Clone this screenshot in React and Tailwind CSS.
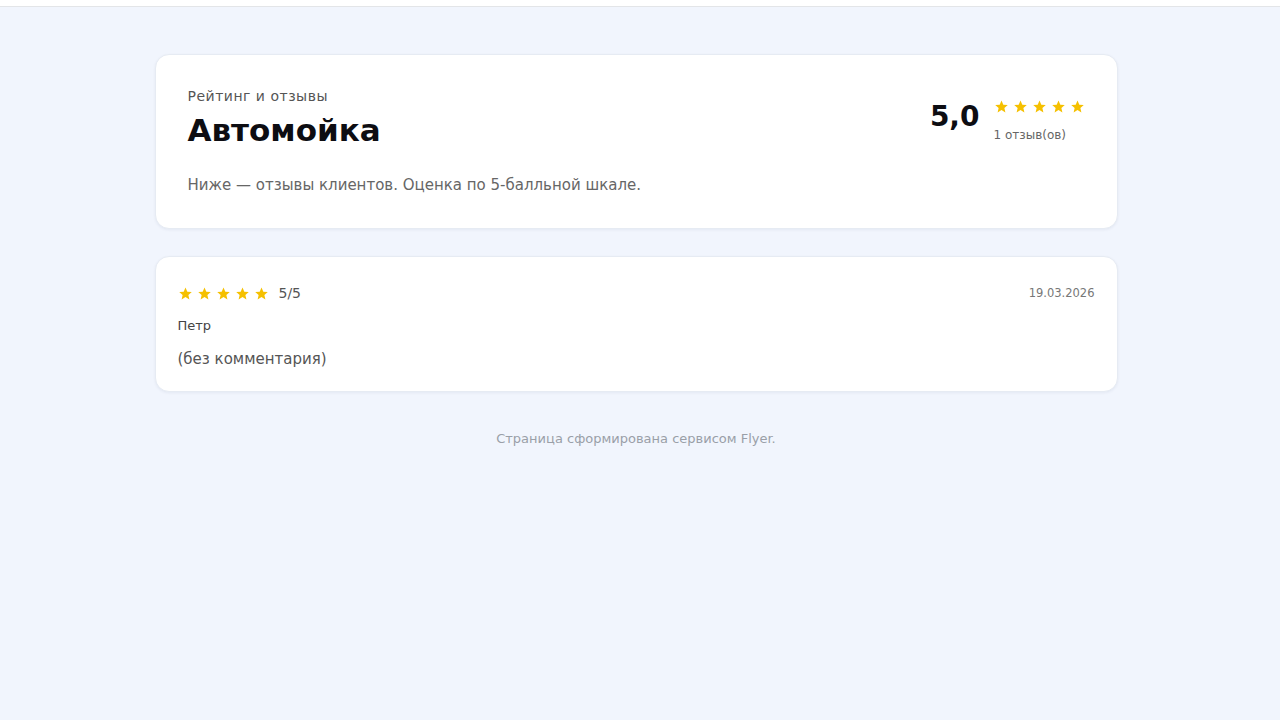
import React from "react";

function Star({ size = 13 }) {
  return (
    <svg width={size} height={size} viewBox="0 0 24 24" className="shrink-0">
      <path
        d="M12 2.5l2.9 6.6 7.1.6-5.4 4.7 1.6 7-6.2-3.7-6.2 3.7 1.6-7L2 9.7l7.1-.6z"
        fill="#f5c000"
      />
    </svg>
  );
}

function Stars({ size, gap }) {
  return (
    <div className={`flex items-center ${gap}`}>
      {[0, 1, 2, 3, 4].map((i) => (
        <Star key={i} size={size} />
      ))}
    </div>
  );
}

export default function App() {
  return (
    <div
      className="min-h-[720px] bg-[#f1f5fd] text-[#111]"
      style={{ fontFamily: '"DejaVu Sans", "Noto Sans", sans-serif' }}
    >
      <div className="h-[7px] bg-white border-b border-[#e3e5e8]" />
      <div className="pr-2">
        <div className="mx-auto w-[963px] pt-[47px]">
          <div className="rounded-[14px] bg-white border border-[#e6ebf3] shadow-[0_1px_3px_rgba(20,40,80,0.06)] px-8 pt-[31px] pb-[32px]">
            <div className="flex items-start justify-between">
              <div>
                <div className="text-[14px] tracking-[0.5px] text-[#555] leading-[20px]">Рейтинг и отзывы</div>
                <div className="text-[31px] font-semibold leading-[38px] mt-[5px] text-[#0d0d12]">Автомойка</div>
              </div>
              <div className="flex items-start gap-[14px] pt-[13px]">
                <div className="text-[28px] font-semibold leading-[36px] text-[#0d0d12]">5,0</div>
                <div className="flex flex-col">
                  <Stars size={15} gap="gap-[4px]" />
                  <div className="text-[12px] text-[#666] leading-[16px] mt-[13px]">1 отзыв(ов)</div>
                </div>
              </div>
            </div>
            <div className="text-[15px] text-[#666] mt-[25px] leading-[22px]">
              Ниже — отзывы клиентов. Оценка по 5-балльной шкале.
            </div>
          </div>

          <div className="mt-[27px] rounded-[14px] bg-white border border-[#e6ebf3] shadow-[0_1px_3px_rgba(20,40,80,0.06)] px-[22px] pt-[26px] pb-[21px]">
            <div className="flex items-center justify-between">
              <div className="flex items-center gap-[10px]">
                <Stars size={15} gap="gap-[4px]" />
                <span className="text-[14px] text-[#555]">5/5</span>
              </div>
              <span className="text-[11.5px] text-[#777]">19.03.2026</span>
            </div>
            <div className="text-[13px] text-[#444] mt-[12px]">Петр</div>
            <div className="text-[15px] text-[#555] mt-[12px]">(без комментария)</div>
          </div>

          <div className="text-center text-[13px] text-[#9a9fa8] mt-[37px]">
            Страница сформирована сервисом Flyer.
          </div>
        </div>
      </div>
    </div>
  );
}
